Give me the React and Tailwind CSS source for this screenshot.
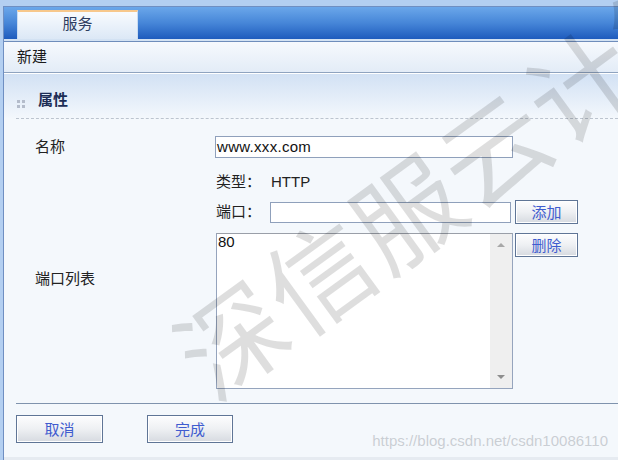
import React from "react";

const Btn = ({ children, className = "" }) => (
  <button
    className={`flex items-center justify-center border border-[#5f7596] bg-linear-to-b from-[#fdfdfe] via-[#eef0f3] to-[#d6dae0] text-[15px] leading-none text-[#3f5ccf] shadow-[inset_0_0_0_1px_#ffffff] ${className}`}
  >
    {children}
  </button>
);

const App = () => {
  return (
    <div className="relative w-[618px] h-[460px] overflow-hidden bg-[#b3cff1] pt-[6px] pl-[3px] font-['Liberation_Sans','Noto_Sans_CJK_SC',sans-serif] text-[15px] text-[#222]">
      <div className="flex h-[454px] flex-col border-l border-t border-[#6f8fc2] bg-[#f4f8fc]">
        {/* Tab bar */}
        <div className="flex h-[32px] items-end bg-linear-to-b from-[#6ba7ea] via-[#4686d8] to-[#1e5bbd] pl-[13px]">
          <div className="flex h-[29px] w-[121px] items-center justify-center border-x border-t-2 border-x-[#c9dcf2] border-t-[#f7c88c] bg-linear-to-b from-[#f8fbfe] to-[#dce8f6] pb-[2px] text-[15px] text-[#2d3d60]">
            服务
          </div>
        </div>
        <div className="h-[3px] border-b border-[#6f8dbb] bg-[#d3e2f3]" />

        {/* Toolbar */}
        <div className="flex h-[31px] items-center border-b border-[#8ea3bf] bg-linear-to-b from-[#f6f9fd] to-[#e3ecf7] pl-[13px] text-[15px] text-[#1b1b1b]">
          新建
        </div>

        {/* Section header */}
        <div className="flex h-[45px] items-end border-t border-white bg-linear-to-b from-[#d2e1f4] to-[#f3f7fc] pb-[7px] pl-[13px]">
          <div className="mr-[13px] mb-[3px] grid grid-cols-2 gap-[2px]">
            <span className="h-[3px] w-[3px] bg-[#b4bccb]" />
            <span className="h-[3px] w-[3px] bg-[#b4bccb]" />
            <span className="h-[3px] w-[3px] bg-[#b4bccb]" />
            <span className="h-[3px] w-[3px] bg-[#b4bccb]" />
          </div>
          <span className="text-[15px] font-bold text-[#1c2d55]">属性</span>
        </div>
        <div className="ml-[12px] border-t border-dashed border-[#bcc4cf]" />

        {/* Form */}
        <div className="flex flex-col pl-[31px] pt-[17px]">
          <div className="flex h-[22px] items-center">
            <span className="w-[180px]">名称</span>
            <div className="flex h-[22px] w-[298px] items-center border border-[#8fa0bb] bg-white px-[1px] text-[15px] tracking-[0.3px] text-[#111]">
              www.xxx.com
            </div>
          </div>

          <div className="mt-[13px] flex h-[22px] items-center">
            <span className="w-[181px]" />
            <span className="w-[55px]">类型：</span>
            <span>HTTP</span>
          </div>

          <div className="mt-[7px] flex h-[24px] items-center">
            <span className="w-[181px]" />
            <span className="w-[54px]">端口：</span>
            <div className="h-[21px] w-[241px] border border-[#8fa0bb] bg-white" />
            <Btn className="ml-[4px] h-[24px] w-[63px]">添加</Btn>
          </div>

          <div className="mt-[9px] flex">
            <span className="w-[181px] pt-[35px]">端口列表</span>
            <div className="flex h-[156px] w-[297px] border border-[#95a4bd] border-t-[#9a9fa8] bg-white">
              <div className="flex-1 pl-[1px] leading-[16px] text-[#111]">80</div>
              <div className="flex w-[22px] flex-col items-center justify-between bg-[#efefef] py-[9px]">
                <span className="h-0 w-0 border-x-[4px] border-b-[4px] border-x-transparent border-b-[#a8a8a8]" />
                <span className="h-0 w-0 border-x-[4px] border-t-[4px] border-x-transparent border-t-[#8e8e8e]" />
              </div>
            </div>
            <Btn className="ml-[2px] h-[24px] w-[63px]">删除</Btn>
          </div>
        </div>

        {/* Footer */}
        <div className="ml-[12px] mt-[14px] border-t border-[#7f93ad]" />
        <div className="flex gap-[44px] pl-[12px] pt-[11px]">
          <Btn className="h-[28px] w-[87px]">取消</Btn>
          <Btn className="h-[28px] w-[86px]">完成</Btn>
        </div>
        <div className="mt-auto h-[3px] bg-[#e6ebf1]" />
      </div>

      {/* Watermarks */}
      <div className="pointer-events-none absolute left-[448px] top-[176px] -translate-x-1/2 -translate-y-1/2 -rotate-[36deg] whitespace-nowrap font-['Noto_Sans_CJK_SC',sans-serif] text-[106px] font-normal leading-none tracking-[2px] text-black/[0.13]">
        深信服云计算
      </div>
      <div className="pointer-events-none absolute right-[10px] top-[431px] whitespace-nowrap text-[15px] leading-[20px] text-[#c9ced4] [text-shadow:0_0_1px_#ffffff]">
        https://blog.csdn.net/csdn10086110
      </div>
    </div>
  );
};

export default App;
